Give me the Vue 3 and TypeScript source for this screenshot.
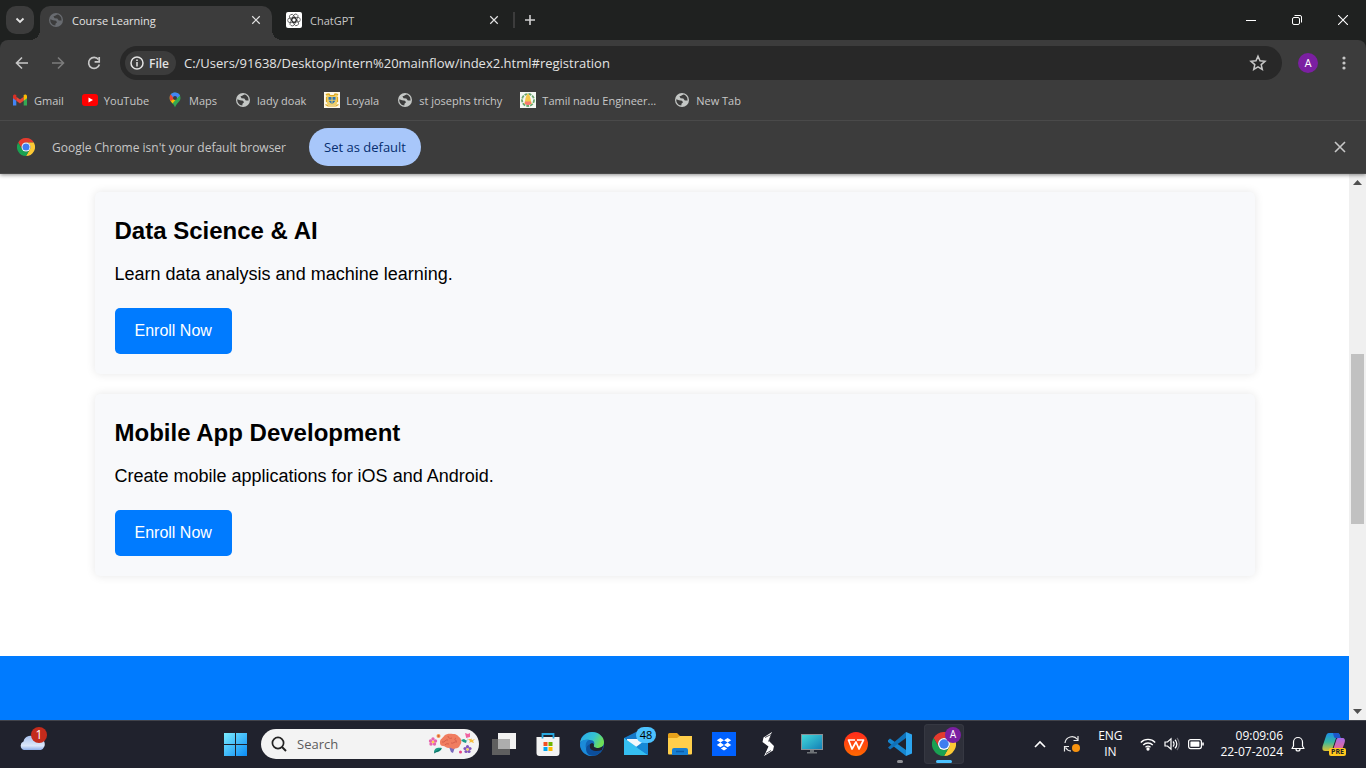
<script setup lang="ts">
import { ref } from 'vue'

interface Bookmark { label: string; icon: string }
interface Course { title: string; text: string }

const bookmarks: Bookmark[] = [
  { label: 'Gmail', icon: 'gmail' },
  { label: 'YouTube', icon: 'youtube' },
  { label: 'Maps', icon: 'maps' },
  { label: 'lady doak', icon: 'globe' },
  { label: 'Loyala', icon: 'crest' },
  { label: 'st josephs trichy', icon: 'globe' },
  { label: 'Tamil nadu Engineer...', icon: 'emblem' },
  { label: 'New Tab', icon: 'globe' },
]

const courses: Course[] = [
  { title: 'Data Science & AI', text: 'Learn data analysis and machine learning.' },
  { title: 'Mobile App Development', text: 'Create mobile applications for iOS and Android.' },
]

const address = ref('C:/Users/91638/Desktop/intern%20mainflow/index2.html#registration')
const query = ref('')
</script>

<template>
  <div class="screen">
    <svg class="defs" aria-hidden="true">
      <symbol id="globe" viewBox="0 0 16 16">
        <circle cx="8" cy="8" r="7" fill="currentColor" />
        <path class="globe-land" d="M2.300 7.200 5 8.300 8 8.800 9 10.300 7.500 11.800 7.300 13.600 5 12.900C3 11.600 2 9.500 2.300 7.200Z" />
        <path class="globe-land" d="M9.500 2.400C8 3 7.300 4 5.500 4.300L6.500 6.300 9.300 6.600 10.800 8.600H13.600L13.200 5.600C12.300 3.800 11 2.700 9.500 2.400Z" />
      </symbol>
      <symbol id="chrome" viewBox="0 0 48 48">
        <path d="M3.200 12A24 24 0 0 1 44.800 12H24a12 12 0 0 0-10.400 18Z" fill="#e33b2e" />
        <path d="M44.800 12A24 24 0 0 1 24 48l10.400-18A12 12 0 0 0 24 12Z" fill="#fcc934" />
        <path d="M24 48A24 24 0 0 1 3.200 12l10.400 18a12 12 0 0 0 20.800 0Z" fill="#1aa152" />
        <circle cx="24" cy="24" r="12" fill="#fff" />
        <circle cx="24" cy="24" r="9.500" fill="#3f7df0" />
      </symbol>
      <symbol id="cross" viewBox="0 0 16 16">
        <path d="M3 3l10 10M13 3 3 13" fill="none" stroke="currentColor" stroke-width="1.600" />
      </symbol>
    </svg>

    <header class="browser">
      <div class="tabstrip">
        <button class="tab-search" aria-label="Search tabs">
          <svg width="16" height="16" viewBox="0 0 16 16"><path d="M4.500 6.500 8 10l3.500-3.500" fill="none" stroke="#e3e3e3" stroke-width="1.800" /></svg>
        </button>
        <div class="tab active">
          <svg class="globe dim" width="16" height="16"><use href="#globe" /></svg>
          <span class="tab-title">Course Learning</span>
          <button class="tab-close" aria-label="Close tab"><svg width="12" height="12"><use href="#cross" /></svg></button>
        </div>
        <div class="tab">
          <svg width="16" height="16" viewBox="0 0 16 16">
            <rect width="16" height="16" rx="2" fill="#fff" />
            <g fill="none" stroke="#222" stroke-width="0.600">
              <rect id="loop" x="5.400" y="1.700" width="4.600" height="8.600" rx="2.300" transform="rotate(30 8 8)" />
              <use href="#loop" transform="rotate(60 8 8)" />
              <use href="#loop" transform="rotate(120 8 8)" />
              <use href="#loop" transform="rotate(180 8 8)" />
              <use href="#loop" transform="rotate(240 8 8)" />
              <use href="#loop" transform="rotate(300 8 8)" />
            </g>
            <circle cx="8" cy="8" r="1.300" fill="#fff" />
          </svg>
          <span class="tab-title">ChatGPT</span>
          <button class="tab-close" aria-label="Close tab"><svg width="12" height="12"><use href="#cross" /></svg></button>
        </div>
        <span class="divider"></span>
        <button class="new-tab" aria-label="New tab">
          <svg width="12" height="12" viewBox="0 0 12 12"><path d="M6 1v10M1 6h10" stroke="#d0d0d0" stroke-width="1.600" /></svg>
        </button>
        <div class="window-controls">
          <button aria-label="Minimize"><svg width="10" height="10" viewBox="0 0 10 10"><path d="M0 5.500h10" stroke="#fff" /></svg></button>
          <button aria-label="Restore"><svg width="10" height="10" viewBox="0 0 10 10" fill="none" stroke="#fff"><rect x=".5" y="2.500" width="7" height="7" rx="1.500" /><path d="M2.500.5H8A1.500 1.500 0 0 1 9.500 2v5.500" /></svg></button>
          <button aria-label="Close"><svg width="10" height="10" viewBox="0 0 10 10"><path d="M0 0l10 10M10 0 0 10" stroke="#fff" stroke-width="1.100" /></svg></button>
        </div>
      </div>

      <div class="toolbar">
        <button class="nav" aria-label="Back"><svg width="16" height="16" viewBox="0 0 16 16"><path d="M14 8H3M8 2.500 2.500 8 8 13.500" fill="none" stroke="#c7c7c7" stroke-width="1.600" /></svg></button>
        <button class="nav" aria-label="Forward"><svg width="16" height="16" viewBox="0 0 16 16"><path d="M2 8h11M8 2.500 13.500 8 8 13.500" fill="none" stroke="#7c7c7c" stroke-width="1.600" /></svg></button>
        <button class="nav" aria-label="Reload"><svg width="16" height="16" viewBox="0 0 16 16"><path d="M12.500 4.500A5.500 5.500 0 1 0 13.400 9.500" fill="none" stroke="#c7c7c7" stroke-width="1.700" /><path d="M13.200 2v4.800H8.600" fill="none" stroke="#c7c7c7" stroke-width="1.700" /></svg></button>
        <div class="omnibox">
          <button class="chip">
            <svg width="14" height="14" viewBox="0 0 14 14"><circle cx="7" cy="7" r="6" fill="none" stroke="#e3e3e3" stroke-width="1.500" /><path d="M7 6v4.500M7 3.500V5" stroke="#e3e3e3" stroke-width="1.500" /></svg>
            File
          </button>
          <input v-model="address" class="address" aria-label="Address" spellcheck="false">
          <button class="star" aria-label="Bookmark this tab"><svg width="18" height="18" viewBox="0 0 18 18"><path d="M9 2.200l2 4.600 5 .5-3.800 3.300 1.100 4.900L9 12.900l-4.300 2.600 1.100-4.900L2 7.300l5-.5Z" fill="none" stroke="#c7c7c7" stroke-width="1.500" /></svg></button>
        </div>
        <button class="avatar" aria-label="Profile">A</button>
        <button class="nav" aria-label="Menu"><svg width="16" height="16" viewBox="0 0 16 16" fill="#c7c7c7"><circle cx="8" cy="3" r="1.600" /><circle cx="8" cy="8" r="1.600" /><circle cx="8" cy="13" r="1.600" /></svg></button>
      </div>

      <nav class="bookmarks">
        <a v-for="b in bookmarks" :key="b.label" href="#">
          <svg v-if="b.icon === 'gmail'" width="16" height="16" viewBox="0 0 16 16">
            <path d="M1 13.500V4.500L4.300 7v6.500Z" fill="#4285f4" /><path d="M15 13.500V4.500L11.700 7v6.500Z" fill="#34a853" />
            <path d="M4.300 4.800 8 7.600l3.700-2.800v4L8 11.600 4.300 8.800Z" fill="#ea4335" />
            <path d="M1 4.300C1 2.500 3 2 4.300 3v5.800L1 6.300Z" fill="#d93025" /><path d="M15 4.300C15 2.500 13 2 11.700 3v5.800L15 6.300Z" fill="#fbbc04" />
          </svg>
          <svg v-else-if="b.icon === 'youtube'" width="16" height="16" viewBox="0 0 16 16"><rect y="2" width="16" height="12" rx="3" fill="#f00" /><path d="M6.500 5.500v5L11 8Z" fill="#fff" /></svg>
          <svg v-else-if="b.icon === 'maps'" width="16" height="16" viewBox="0 0 16 16">
            <path d="M8 .5a5.500 5.500 0 0 1 5.500 5.500c0 4-4.200 5-5.500 9.500C7 11.500 2.500 9.800 2.500 6A5.500 5.500 0 0 1 8 .5Z" fill="#34a853" />
            <path d="M3 8.300 8 2.500 12.500 3 5.500 11.500Z" fill="#fbbc04" /><path d="M3.800 2.300 8 6 3.500 9.200C2.300 7 2.200 4.300 3.800 2.300Z" fill="#ea4335" />
            <path d="M3.800 2.300C6-.3 11.500-.2 13 3.500L8 8Z" fill="#4285f4" /><circle cx="8" cy="6" r="2" fill="#3c3c3c" />
          </svg>
          <svg v-else-if="b.icon === 'crest'" width="16" height="16" viewBox="0 0 16 16">
            <rect width="16" height="16" fill="#fff8e6" />
            <path d="M1.500 2 4 1.500 6 3h4l2-1.500 2.500.5-1 3 .5 3-1.500 5H3.500L2 8l.5-3Z" fill="#efcf6a" />
            <path d="M2 2.500 5 2l1 1.500h4L11 2l3 .5M1.500 12.500 4 14h8l2.500-1.500M2.500 5v5M13.500 5v5" fill="none" stroke="#dca71f" stroke-width="1.200" />
            <path d="M4.500 5h3v2.800h-3ZM8.500 5h3v2.800h-3ZM4.500 8.800h3V12ZM8.500 8.800h3L8.500 12Z" fill="#2a73b5" />
          </svg>
          <svg v-else-if="b.icon === 'emblem'" width="16" height="16" viewBox="0 0 16 16">
            <rect width="16" height="16" fill="#f4f7f2" /><circle cx="8" cy="8" r="6" fill="none" stroke="#67a56d" stroke-width="1.800" stroke-dasharray="3 1" />
            <path d="M8 1.500C10 3 10.500 6 11 9l1 3H4l1-3c.5-3 1-6 3-7.500Z" fill="#f5c84b" /><path d="M5 9.500h6v2l-1.500 1.500h-3L5 11.500Z" fill="#f77a70" />
          </svg>
          <svg v-else class="globe" width="16" height="16"><use href="#globe" /></svg>
          <span>{{ b.label }}</span>
        </a>
      </nav>

      <div class="infobar">
        <svg width="18" height="18"><use href="#chrome" /></svg>
        <span>Google Chrome isn't your default browser</span>
        <button class="set-default">Set as default</button>
        <button class="dismiss" aria-label="Dismiss"><svg width="16" height="16"><use href="#cross" /></svg></button>
      </div>
    </header>

    <div class="viewport">
      <main class="page">
        <section class="courses">
          <article v-for="c in courses" :key="c.title" class="course">
            <h3>{{ c.title }}</h3>
            <p>{{ c.text }}</p>
            <button class="enroll">Enroll Now</button>
          </article>
        </section>
        <section class="band"></section>
      </main>
      <div class="scrollbar" aria-hidden="true">
        <svg width="9" height="5" viewBox="0 0 9 5"><path d="M0 5 4.500 0 9 5Z" fill="#505050" /></svg>
        <div class="track"><div class="thumb"></div></div>
        <svg width="9" height="5" viewBox="0 0 9 5"><path d="M0 0 4.500 5 9 0Z" fill="#505050" /></svg>
      </div>
    </div>

    <footer class="taskbar">
      <button class="weather" aria-label="Weather">
        <svg width="28" height="28" viewBox="0 0 28 28">
          <defs><linearGradient id="cloud" x2="0" y2="1"><stop stop-color="#a9c2ee" /><stop offset=".7" stop-color="#dce7fa" /><stop offset="1" stop-color="#8eaee8" /></linearGradient></defs>
          <path d="M6 20a4.500 4.500 0 0 1-.5-8.500A7 7 0 0 1 18 8.500 6 6 0 0 1 23 20Z" fill="url(#cloud)" />
        </svg>
        <span class="alert">1</span>
      </button>

      <div class="apps">
        <button class="app" aria-label="Start">
          <svg width="24" height="24" viewBox="0 0 24 24">
            <defs><linearGradient id="win" x2="24" y2="24" gradientUnits="userSpaceOnUse"><stop stop-color="#80f0ff" /><stop offset="1" stop-color="#0a8bf5" /></linearGradient></defs>
            <path d="M1 1h11v11H1ZM13 1h11v11H13ZM1 13h11v11H1ZM13 13h11v11H13Z" fill="url(#win)" />
          </svg>
        </button>
        <label class="search">
          <svg width="16" height="16" viewBox="0 0 16 16"><circle cx="7" cy="7" r="5.600" fill="none" stroke="#222" stroke-width="1.700" /><path d="m11 11 4 4" stroke="#222" stroke-width="2" /></svg>
          <input v-model="query" type="text" placeholder="Search" aria-label="Search">
          <svg width="48" height="24" viewBox="0 0 48 24">
            <g fill="#e765ae"><circle cx="5" cy="7" r="1.700" /><circle cx="7.500" cy="9" r="1.700" /><circle cx="6.500" cy="12" r="1.700" /><circle cx="3" cy="12" r="1.700" /><circle cx="2.500" cy="9" r="1.700" /></g><circle cx="5" cy="10" r="1.300" fill="#ffd34d" />
            <circle cx="10.500" cy="4" r="2" fill="#f59a4c" /><circle cx="10.500" cy="4" r="1" fill="#d6593b" />
            <path d="M6 20c0-4 4-5 8-4-1 3-4 5-8 4Z" fill="#1d9b87" /><path d="M6 21 13 17" stroke="#0b6b62" />
            <path d="M21 15h6l-2 6-2-1Z" fill="#7b6bbd" />
            <path d="M12 10c0-3 3-4 4-6 3-3 7-2 9-2 4 0 5 2 6 3 3 2 3 6 1 8-1 4-5 3-6 4-2 0-3-2-5-1-3 0-4-2-6-2-3 0-3-3-3-4Z" fill="#f07d60" />
            <path d="M14 10c3 1 3-3 6-2M20 4c0 2 2 3 4 2m-1 5c3 1 3-2 6-1M17 13c1-2 3-1 4-1M28 6c-2 1-1 3 1 3" fill="none" stroke="#cf5947" stroke-width=".8" />
            <path d="M38 5 37 1l3 1 2-1v4l-4 1Z" fill="#ef62a0" /><path d="m33 8 3-1 3 2 1-4-2 6-3-1Z" fill="#1d9b87" />
            <path d="m43 6 1 2 3-1-2 2 1 2-3-1-2 1 1-2-2-2h3Z" fill="#f6bd3d" />
            <g fill="#8455bc"><circle cx="39.500" cy="14.700" r="1.600" /><circle cx="42" cy="16.500" r="1.600" /><circle cx="41" cy="19.500" r="1.600" /><circle cx="38" cy="19.500" r="1.600" /><circle cx="37" cy="16.500" r="1.600" /></g><circle cx="39.500" cy="17.500" r="1.200" fill="#ffd34d" />
            <circle cx="32.500" cy="20" r="1.500" fill="#e94386" />
          </svg>
        </label>
        <button class="app" aria-label="Task view">
          <svg width="24" height="24" viewBox="0 0 24 24"><rect x="6" y="1" width="18" height="16" fill="#f2f2f2" /><rect y="7" width="18" height="16" fill="#5f5f5f" /><path d="M6 7h12v10H6Z" fill="#adadad" /></svg>
        </button>
        <button class="app" aria-label="Store">
          <svg width="24" height="24" viewBox="0 0 24 24"><path d="M.5 5h23v16a3 3 0 0 1-3 3h-17a3 3 0 0 1-3-3Z" fill="#f3f3f3" /><path d="M6.500 6.500V2h11v4.500" fill="none" stroke="#28a8df" stroke-width="1.800" /><path d="M7.500 10h4v4h-4Z" fill="#f25022" /><path d="M12.500 10h4v4h-4Z" fill="#6fb400" /><path d="M7.500 15h4v4h-4Z" fill="#00a4ef" /><path d="M12.500 15h4v4h-4Z" fill="#ffb900" /></svg>
        </button>
        <button class="app" aria-label="Edge">
          <svg width="24" height="24" viewBox="0 0 24 24">
            <defs><linearGradient id="wave" x2="1" y2=".4"><stop stop-color="#2aa9ee" /><stop offset=".6" stop-color="#35c3d1" /><stop offset="1" stop-color="#6fdf55" /></linearGradient></defs>
            <circle cx="12" cy="12" r="12" fill="#1266b8" />
            <path d="M0 11C1 4 6 0 12 0c7 0 12 5 12 10 0 4-3 6-6 6-3 0-5-1-4-3 1-2 0-5-4-5C5 7 1 9 0 11Z" fill="url(#wave)" />
            <path d="M0 12c1-4 5-5 9-4C6 9 5 13 6 16c1 4 4 7 8 8C6 25 0 19 0 12Z" fill="#1b8bd9" />
            <path d="M14 13c-1 2 1 3 4 3 2 0 4-1 5.500-2.500L22 18c-2 2-9 3-12-1-1-2-1-5 2-6 1 0 2 1 2 2Z" fill="#20222d" />
            <path d="M10 12c-2 5 4 9 12 6-3 5-9 7-13 5-4-3-4-9 1-11Z" fill="#0c4e9b" />
          </svg>
        </button>
        <button class="app" aria-label="Mail">
          <svg width="24" height="24" viewBox="0 0 24 24"><path d="M0 6 12 0l12 6v17H0Z" fill="#1478c8" /><path d="M3 7h18v4l-9 7-9-7Z" fill="#f4f7fa" /><path d="M0 6 24 23H0Z" fill="#35bff1" /><path d="M24 6v17L12 15Z" fill="#1689d6" /></svg>
          <span class="count">48</span>
        </button>
        <button class="app" aria-label="File Explorer">
          <svg width="24" height="24" viewBox="0 0 24 24"><path d="M0 2.500A1.500 1.500 0 0 1 1.500 1H9l3 3h10.500A1.500 1.500 0 0 1 24 5.500V9H0Z" fill="#e6a21b" /><path d="M0 6h9l3-2h12v17.500a1 1 0 0 1-1 1H1a1 1 0 0 1-1-1Z" fill="#ffcf4b" /><path d="M4 23v-5a2 2 0 0 1 2-2h12a2 2 0 0 1 2 2v5Z" fill="#177fd1" /><path d="M8 19.500h8" stroke="#0a5ba7" stroke-width="1.500" /></svg>
        </button>
        <button class="app" aria-label="Dropbox">
          <svg width="24" height="24" viewBox="0 0 24 24"><path d="M0 0h24v24H0Z" fill="#0061fe" /><path d="m8.400 6 3.600 2.300-3.600 2.300-3.600-2.300ZM15.600 6l3.600 2.300-3.600 2.300L12 8.300ZM8.400 10.600l3.600 2.300-3.600 2.300-3.600-2.300ZM15.600 10.600l3.600 2.300-3.600 2.300-3.600-2.300ZM12 14.500l3.200 2L12 18.500l-3.200-2Z" fill="#fff" /></svg>
        </button>
        <button class="app" aria-label="Smart notes">
          <svg width="24" height="24" viewBox="0 0 24 24"><path d="M16 0 7.500 5.500 6.500 10l6 4.500L8 24l9-5.500 1-4.500-5-5Z" fill="#fff" /><path d="M12.500 9.500 16 1M11 15 8 23M9 5.500l6-3M15 18.500l-5 3" fill="none" stroke="#20222d" stroke-width=".8" /></svg>
        </button>
        <button class="app" aria-label="Desktop">
          <svg width="24" height="24" viewBox="0 0 24 24"><defs><linearGradient id="display" x2="1" y2="1"><stop stop-color="#43dadb" /><stop offset="1" stop-color="#127eb6" /></linearGradient></defs><rect x="1.500" y="2.500" width="21" height="15" fill="url(#display)" stroke="#8a9095" /><path d="M10 18h4v2h3v1.500H7V20h3Z" fill="#6f7377" /></svg>
        </button>
        <button class="app" aria-label="WPS Office">
          <svg width="24" height="24" viewBox="0 0 24 24"><defs><linearGradient id="office" x2="0" y2="1"><stop stop-color="#ff2a1c" /><stop offset="1" stop-color="#ff6a00" /></linearGradient></defs><circle cx="12" cy="12" r="12" fill="url(#office)" /><path d="M11 8H4.500L8 17l4-7 3 7 4.500-9H13" fill="none" stroke="#fff" stroke-width="1.700" stroke-linejoin="round" /></svg>
        </button>
        <button class="app running" aria-label="Visual Studio Code">
          <svg width="24" height="24" viewBox="0 0 24 24"><path d="M0 8.300 2 6.500 18 18v6L0 10Z" fill="#1686cf" /><path d="M0 15.500 18 0v6L2 17.500Z" fill="#0f72ba" /><path d="m18 0 6 2.500v19L18 24Z" fill="#2ca5f0" /></svg>
        </button>
        <button class="app current" aria-label="Google Chrome">
          <svg width="24" height="24"><use href="#chrome" /></svg>
          <span class="badge">A</span>
        </button>
      </div>

      <div class="tray">
        <button class="chevron" aria-label="Show hidden icons"><svg width="12" height="8" viewBox="0 0 12 8"><path d="m1 7 5-5 5 5" fill="none" stroke="#fff" stroke-width="1.600" /></svg></button>
        <button class="sync" aria-label="Updates"><svg width="18" height="18" viewBox="0 0 18 18"><path d="M2 8A7 7 0 0 1 14.500 4.500M15 1v4.500h-4.500M1.500 16.500v-5H6M2.500 12.500A7 7 0 0 0 8 16" fill="none" stroke="#e8e8e8" stroke-width="1.200" /><circle cx="13" cy="13" r="4" fill="#f7930f" /></svg></button>
        <button class="lang">ENG<br>IN</button>
        <button class="status" aria-label="Network, sound and battery">
          <svg width="16" height="14" viewBox="0 0 16 14" fill="none" stroke="#fff" stroke-width="1.300"><path d="M.8 5.500a10 10 0 0 1 14.400 0M3.200 8a6.800 6.800 0 0 1 9.600 0M5.500 10.300a3.600 3.600 0 0 1 5 0" /><circle cx="8" cy="12" r="1" fill="#fff" /></svg>
          <svg width="16" height="14" viewBox="0 0 16 14" fill="none" stroke="#fff" stroke-width="1.200"><path d="M1 5v4h2.500L7 12.200V1.800L3.500 5ZM9 4.500a3.500 3.500 0 0 1 0 5M11 2.700a6 6 0 0 1 0 8.600" /><path d="M13 1a9 9 0 0 1 0 12" stroke="#6c6c75" /></svg>
          <svg width="16" height="14" viewBox="0 0 16 14"><rect x=".6" y="2.600" width="12.800" height="9" rx="2" fill="none" stroke="#fff" stroke-width="1.200" /><rect x="2.400" y="4.400" width="9" height="5.400" rx=".6" fill="#fff" /><path d="M15 5.500v3" stroke="#fff" stroke-width="1.600" /></svg>
        </button>
        <button class="clock">09:09:06<br>22-07-2024</button>
        <button class="bell" aria-label="Notifications"><svg width="14" height="16" viewBox="0 0 14 16"><path d="M1 12.500h12L11.500 10V6a4.500 4.500 0 0 0-9 0v4ZM5 13a2 2 0 0 0 4 0" fill="none" stroke="#fff" stroke-width="1.200" stroke-linejoin="round" /></svg></button>
        <button class="copilot" aria-label="Copilot preview">
          <svg width="24" height="24" viewBox="0 0 24 24">
            <defs><linearGradient id="pilotA" x2="0" y2="1"><stop stop-color="#1b8de8" /><stop offset=".5" stop-color="#37b8a0" /><stop offset="1" stop-color="#e0c230" /></linearGradient><linearGradient id="pilotB" x2="0" y2="1"><stop stop-color="#a66be8" /><stop offset="1" stop-color="#f0688c" /></linearGradient></defs>
            <path d="M7 1h8c2 0 2.500 1 3 3l.5 2H14l-3 9c-1 3-2 4-4 4H3c-3 0-3-3-2-6l3-9c.6-2 1.500-3 3-3Z" fill="url(#pilotA)" /><path d="M11 1h4c2 0 2.500 1 3 3l.5 2H14c-2 0-2-1-3-5Z" fill="#1c55c9" /><path d="M16 6h4c3 0 3.500 2 2.500 5L20 18h-9l3-9c.5-2 1-3 2-3Z" fill="url(#pilotB)" />
          </svg>
          <span class="pre">PRE</span>
        </button>
      </div>
    </footer>
  </div>
</template>

<style>
body { margin: 0; overflow: hidden; }
</style>

<style scoped>
* { box-sizing: border-box; }
.screen { display: flex; flex-direction: column; height: 100vh; font-family: "Open Sans", "Noto Sans", sans-serif; font-size: 12px; background: #fff; }
button { display: flex; align-items: center; justify-content: center; padding: 0; border: 0; background: none; color: inherit; font: inherit; }
input { min-width: 0; border: 0; outline: 0; padding: 0; background: none; color: inherit; font: inherit; }
svg { display: block; flex: none; }
.defs { position: absolute; width: 0; height: 0; }
.globe { color: #c4c7c5; }
.globe.dim { color: #686b70; }
.globe-land { fill: #3c3c3c; }

.browser { flex: none; position: relative; z-index: 1; background: #1f2120; color: #c7c7c7; box-shadow: 0 1px 4px rgba(0, 0, 0, .45); }
.tabstrip { display: flex; height: 40px; padding-left: 6px; background: #1f2120; }
.tab-search { width: 28px; height: 28px; margin: 6px 6px 0 0; border-radius: 10px; background: #3c3c3c; }
.tab { display: flex; align-items: center; width: 240px; height: 34px; margin-top: 6px; padding: 0 10px 6px 14px; gap: 8px; }
.tab.active { position: relative; width: 232px; padding: 0 8px 6px; border-radius: 10px 10px 0 0; background: #3c3c3c; color: #e3e3e3; }
.tab.active::before, .tab.active::after { content: ""; position: absolute; bottom: 0; width: 10px; height: 10px; }
.tab.active::before { right: 100%; background: radial-gradient(circle at 0 0, transparent 10px, #3c3c3c 10px); }
.tab.active::after { left: 100%; background: radial-gradient(circle at 100% 0, transparent 10px, #3c3c3c 10px); }
.tab-title { flex: 1; font-size: 11px; }
.tab-close { width: 16px; height: 16px; color: #e3e3e3; }
.divider { width: 2px; height: 16px; margin: 12px 0 0 1px; background: #3c3c3c; }
.new-tab { width: 28px; height: 28px; margin: 6px 0 0 1px; }
.window-controls { display: flex; margin-left: auto; }
.window-controls button { width: 46px; height: 40px; }

.toolbar { display: flex; align-items: center; gap: 8px; height: 46px; padding: 0 8px; border-radius: 8px 8px 0 0; background: #3c3c3c; }
.nav { width: 28px; height: 28px; }
.omnibox { display: flex; align-items: center; flex: 1; height: 34px; margin: 0 8px 0 4px; padding: 0 15px 0 5px; gap: 8px; border-radius: 17px; background: #282828; color: #e3e3e3; font-size: 13px; }
.chip { gap: 5px; height: 24px; padding: 0 7px 0 5px; border-radius: 12px; background: #3c3c3c; font-size: 12px; font-weight: 600; }
.address { flex: 1; height: 24px; }
.avatar { width: 20px; height: 20px; margin-right: 4px; border-radius: 50%; background: #7b1fa2; color: #fff; font: 11px Roboto, sans-serif; }

.bookmarks { display: flex; align-items: center; height: 34px; padding: 0 12px 6px; gap: 18px; background: #3c3c3c; font-size: 11px; }
.bookmarks a { display: flex; align-items: center; gap: 6px; color: inherit; text-decoration: none; white-space: nowrap; }

.infobar { display: flex; align-items: center; height: 54px; padding: 0 18px 0 17px; border-top: 1px solid #4a4a4a; border-bottom: 1px solid #4a4a4a; background: #3c3c3c; font-size: 12px; }
.infobar span { margin: 0 23px 0 17px; }
.set-default { height: 38px; padding: 0 15px; border-radius: 19px; background: #a8c7fa; color: #062e6f; font-size: 13px; }
.dismiss { margin-left: auto; }

.viewport { display: flex; flex: 1; min-height: 0; }
.page { display: flex; flex: 1; flex-direction: column; font-family: "Liberation Sans", Arial, sans-serif; color: #000; }
.courses { display: flex; flex-direction: column; gap: 20px; width: 100%; max-width: 1200px; margin: 0 auto; padding: 18px 20px 80px; }
.course { padding: 20px; border-radius: 5px; background: #f8f9fb; box-shadow: 0 0 10px rgba(0, 0, 0, .1); }
h3 { margin: 0 0 10px; font-size: 24px; line-height: 38px; }
p { margin: 0 0 19px; font-size: 18px; line-height: 29px; }
.enroll { padding: 10px 20px; border-radius: 5px; background: #007bff; color: #fff; font-size: 16px; line-height: 26px; }
.band { flex: 1; background: #007bff; }
.scrollbar { display: flex; flex-direction: column; align-items: center; width: 17px; padding: 6px 0; background: #f0f0f0; }
.track { flex: 1; width: 13px; padding-top: 169px; }
.thumb { height: 170px; background: #c1c1c1; }

.taskbar { display: flex; align-items: center; flex: none; height: 48px; background: #20222d; box-shadow: inset 0 1px #41434b; color: #fff; }
.weather { position: relative; width: 40px; height: 40px; margin-left: 12px; }
.alert { position: absolute; top: 3px; right: 5px; width: 16px; height: 16px; border-radius: 50%; background: #c42b1c; line-height: 16px; }
.apps { display: flex; align-items: center; gap: 4px; margin-left: 163px; }
.app { position: relative; width: 40px; height: 40px; border-radius: 4px; }
.search { display: flex; align-items: center; width: 218px; height: 30px; margin: 0 1px 0 2px; padding: 0 3px 0 10px; gap: 10px; border-radius: 15px; background: #f3f3f3; color: #5c5c5c; font-size: 13px; }
.search input { flex: 1; }
.search input::placeholder { color: #5c5c5c; opacity: 1; }
.count { position: absolute; top: 3px; right: 0; width: 20px; height: 16px; border-radius: 8px; background: #4cc2ff; color: #000; font-size: 11px; line-height: 16px; }
.current { background: #2e303a; box-shadow: inset 0 0 0 1px #363842; }
.running::after, .current::after { content: ""; position: absolute; bottom: 1px; width: 6px; height: 3px; border-radius: 2px; background: #8f9095; }
.current::after { width: 16px; background: #4cc2ff; }
.badge { position: absolute; top: 3px; right: 3px; width: 16px; height: 16px; border-radius: 50%; background: #7b1fa2; font: 10px/16px Roboto, sans-serif; }
.tray { display: flex; align-items: center; margin-left: auto; padding-right: 20px; }
.chevron { width: 12px; }
.sync { margin-left: 17px; }
.lang { width: 28px; margin-left: 15px; line-height: 16px; }
.status { margin-left: 16px; gap: 8px; }
.clock { margin-left: 16px; line-height: 16px; text-align: right; }
.bell { margin-left: 8px; }
.copilot { position: relative; margin-left: 17px; }
.pre { position: absolute; right: 0; bottom: 0; padding: 0 2px; border-radius: 2px; background: #ffc81e; color: #222; font-size: 7px; font-weight: 700; line-height: 8px; }
</style>
